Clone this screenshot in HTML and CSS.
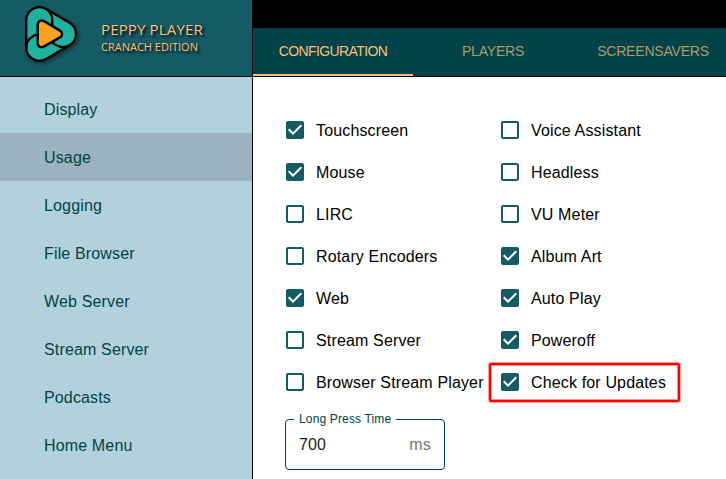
FILE: index.html
```html
<!DOCTYPE html>
<html lang="en">
<head>
<meta charset="utf-8">
<title>Peppy Player</title>
<link rel="stylesheet" href="styles.css">
</head>
<body>
<svg width="0" height="0" class="defs">
  <symbol id="on" viewBox="0 0 24 24"><path d="M19 3H5c-1.11 0-2 .9-2 2v14c0 1.1.89 2 2 2h14c1.11 0 2-.9 2-2V5c0-1.1-.89-2-2-2zm-9 14l-5-5 1.41-1.41L10 14.17l7.59-7.59L19 8l-9 9z"/></symbol>
  <symbol id="off" viewBox="0 0 24 24"><path d="M19 5v14H5V5h14m0-2H5c-1.1 0-2 .9-2 2v14c0 1.1.9 2 2 2h14c1.1 0 2-.9 2-2V5c0-1.1-.9-2-2-2z"/></symbol>
</svg>
<div class="app">
  <aside class="sidebar">
    <header class="brand">
      <svg class="logo" width="60" height="66" viewBox="20 0 60 66" stroke="#000" stroke-width="2.400" stroke-linejoin="round" stroke-linecap="round">
        <path fill="#20b2a0" d="M26.200 20.500A13.200 13.200 0 0 1 46 9L69.500 22.600A13.200 13.200 0 0 1 69.500 45.400L46 59A13.200 13.200 0 0 1 26.200 47.500Z"/>
        <path fill="none" d="M46 9A13 13 0 0 1 52.300 20.500V25.500M26.400 47.500A13 13 0 0 1 33 36.200L37 34.500M69.500 45.300A13 13 0 0 1 56.500 45.300L52 42.500"/>
        <path fill="#f9a01f" d="M37.700 25C37.700 21 41 19.600 44.200 21.300L60 30.600C62.800 32.300 62.800 35.700 60 37.400L44.200 46.400C41 48 37.700 47 37.700 43Z"/>
      </svg>
      <div class="names">
        <div class="name">PEPPY PLAYER</div>
        <div class="edition">CRANACH EDITION</div>
      </div>
    </header>
    <nav class="menu">
      <a>Display</a>
      <a class="selected">Usage</a>
      <a>Logging</a>
      <a>File Browser</a>
      <a>Web Server</a>
      <a>Stream Server</a>
      <a>Podcasts</a>
      <a>Home Menu</a>
    </nav>
  </aside>
  <main class="main">
    <div class="tabs">
      <div class="tab active">CONFIGURATION</div>
      <div class="tab">PLAYERS</div>
      <div class="tab">SCREENSAVERS</div>
    </div>
    <div class="content">
      <div class="options">
        <label><svg><use href="#on"/></svg><span>Touchscreen</span></label>
        <label><svg><use href="#off"/></svg><span>Voice Assistant</span></label>
        <label><svg><use href="#on"/></svg><span>Mouse</span></label>
        <label><svg><use href="#off"/></svg><span>Headless</span></label>
        <label><svg><use href="#off"/></svg><span>LIRC</span></label>
        <label><svg><use href="#off"/></svg><span>VU Meter</span></label>
        <label><svg><use href="#off"/></svg><span>Rotary Encoders</span></label>
        <label><svg><use href="#on"/></svg><span>Album Art</span></label>
        <label><svg><use href="#on"/></svg><span>Web</span></label>
        <label><svg><use href="#on"/></svg><span>Auto Play</span></label>
        <label><svg><use href="#off"/></svg><span>Stream Server</span></label>
        <label><svg><use href="#on"/></svg><span>Poweroff</span></label>
        <label><svg><use href="#off"/></svg><span>Browser Stream Player</span></label>
        <label class="marked"><svg><use href="#on"/></svg><span>Check for Updates</span></label>
      </div>
      <fieldset class="field">
        <legend>Long Press Time</legend>
        <div class="value"><span>700</span><span class="unit">ms</span></div>
      </fieldset>
    </div>
  </main>
</div>
</body>
</html>
```
FILE: styles.css
```css
*, *::after { box-sizing: border-box; }
body {
  margin: 0;
  width: 726px;
  height: 479px;
  overflow: hidden;
  background: #fff;
  font: 16px/24px "Liberation Sans", Arial, sans-serif;
  letter-spacing: 0.15px;
}
.defs { display: block; }
.app { display: flex; height: 479px; }
.sidebar {
  flex: 0 0 253px;
  background: #b3d1dc;
  border-right: 1px solid #000;
}
.brand {
  display: flex;
  height: 77px;
  padding-left: 20px;
  background: #155b65;
  border-bottom: 1px solid #000;
}
.logo { filter: drop-shadow(2px 2px 2px rgba(0, 0, 0, .4)); }
.names {
  padding: 19px 0 0 21px;
  color: #ffbf77;
  font-family: "Open Sans", "Noto Sans", sans-serif;
  letter-spacing: 0;
  text-shadow: 2px 2px 3px #000;
  white-space: nowrap;
}
.name { font-size: 15px; line-height: 21px; letter-spacing: 0.15px; }
.edition { font-size: 11px; line-height: 14px; }
.menu { padding-top: 8px; color: #004448; }
.menu a { display: block; height: 48px; padding: 13px 0 0 44px; }
.menu .selected { background: #9cb2be; }
.main { flex: 1; min-width: 0; }
.tabs {
  display: flex;
  height: 77px;
  border-top: 28px solid #000;
  border-bottom: 1px solid #000;
  background: #00444a;
}
.tab {
  flex: 0 0 160px;
  height: 48px;
  font-size: 14px;
  line-height: 47px;
  letter-spacing: -0.2px;
  text-align: center;
  color: #b29a69;
  white-space: nowrap;
}
.active { color: #ffbf77; border-bottom: 2px solid #ffbf77; letter-spacing: -0.6px; }
.content { padding: 32px 0 0 30px; }
.options {
  display: grid;
  grid-template-columns: 215px 200px;
  grid-auto-rows: 42px;
}
label {
  display: flex;
  align-items: center;
  gap: 9px;
  position: relative;
  white-space: nowrap;
}
label svg { width: 24px; height: 24px; fill: #155b65; }
label span { padding-top: 2px; }
.marked::after {
  content: "";
  position: absolute;
  left: -9px;
  top: 2px;
  width: 191px;
  height: 39px;
  border: 2px solid #f00;
  border-radius: 2px;
  box-shadow: inset 0 0 0 1px #ff9090, 0 0 0 1px #ffa0a0;
}
.field {
  width: 160px;
  height: 58px;
  margin: 9px 0 0 2px;
  padding: 0 13px 0 13px;
  border: 1px solid #00444a;
  border-radius: 4px;
}
legend {
  margin-left: -5px;
  padding: 0 5px;
  font-size: 12px;
  line-height: 14px;
  letter-spacing: 0.15px;
  color: #00444a;
}
.value { display: flex; justify-content: space-between; padding-top: 7px; color: #222; }
.unit { color: #777; }
```
